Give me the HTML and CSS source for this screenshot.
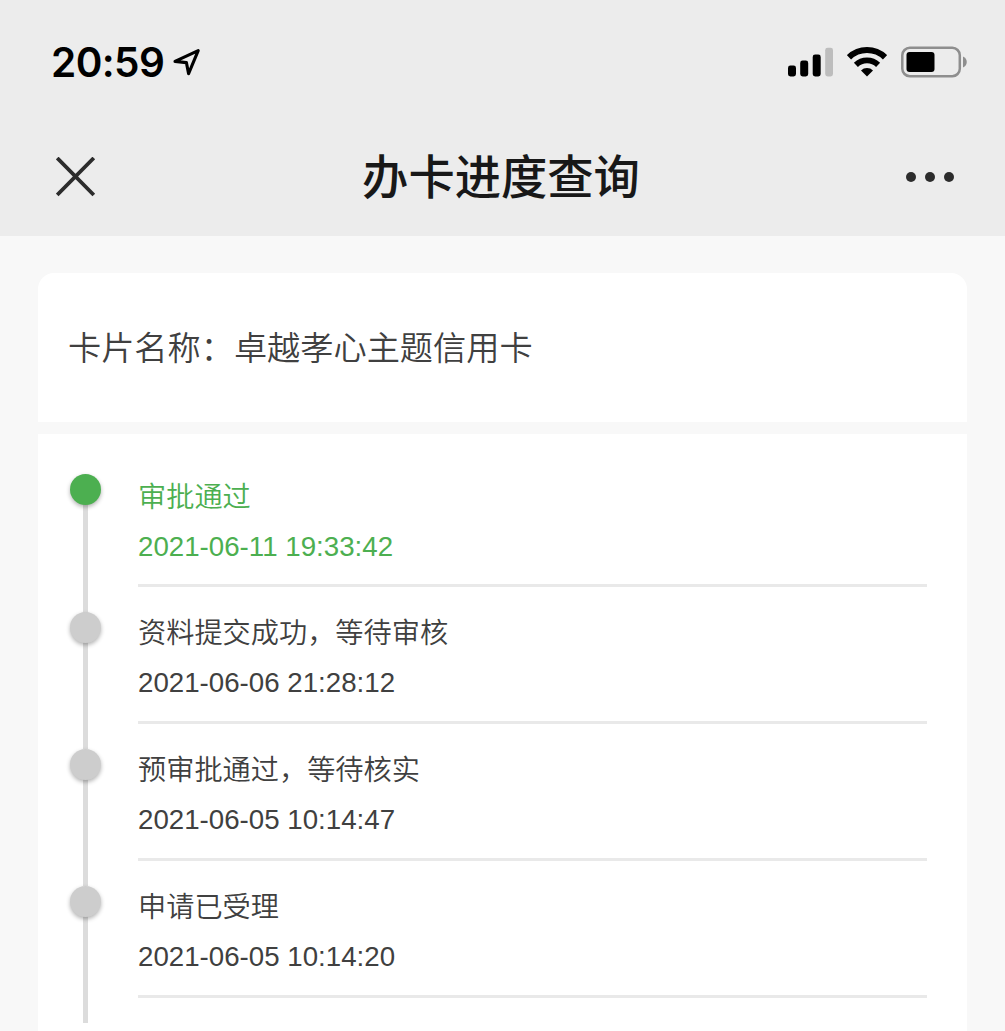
FILE: index.html
```html
<!DOCTYPE html>
<html lang="zh-CN">
<head>
    <meta charset="UTF-8">
    <meta name="viewport" content="width=device-width, initial-scale=1.0">
    <title>办卡进度查询</title>
    <link rel="stylesheet" href="styles.css">
</head>
<body>
    <header class="header">
        <div class="status-bar">
            <div class="status-left">
                <span class="time">20:59</span>
                <svg class="location" width="30" height="30" viewBox="0 0 30 30">
                    <path d="M3 14.4 L26.2 3.6 L16.6 26.6 L14.4 15.6 Z" fill="none" stroke="#000" stroke-width="3.1" stroke-linejoin="round"/>
                </svg>
            </div>
            <div class="status-right">
                <svg width="46" height="30" viewBox="0 0 46 30">
                    <rect x="1" y="18.5" width="8" height="11" rx="2.4"/>
                    <rect x="13.2" y="13.5" width="8" height="16" rx="2.4"/>
                    <rect x="25.7" y="7.5" width="8" height="22" rx="2.4"/>
                    <rect x="38.2" y="0.8" width="7.8" height="28.7" rx="2.4" fill="#bdbdbd"/>
                </svg>
                <svg width="40" height="30" viewBox="0 0 40 30">
                    <path d="M2 10.3 A26 26 0 0 1 38 10.3" fill="none" stroke="#000" stroke-width="6"/>
                    <path d="M8.9 17.8 A16 16 0 0 1 31.1 17.8" fill="none" stroke="#000" stroke-width="5.8"/>
                    <path d="M20 29.5 L14 23.4 A8.8 8.8 0 0 1 26 23.4 Z"/>
                </svg>
                <svg width="66" height="32" viewBox="0 0 66 32">
                    <rect x="1.3" y="1.8" width="57.5" height="28.4" rx="7.5" fill="none" stroke="#8e8e8e" stroke-width="2.5"/>
                    <rect x="5.5" y="6" width="28" height="20" rx="3"/>
                    <path d="M62 10.5 C67 12.5 67 19.5 62 21.5 Z" fill="#8e8e8e"/>
                </svg>
            </div>
        </div>
        <div class="nav-bar">
            <svg class="close" width="40" height="40" viewBox="0 0 40 40">
                <path d="M1.2 1 L37.8 38 M37.8 1 L1.2 38" fill="none" stroke="#2c2c2c" stroke-width="3.8"/>
            </svg>
            <h1 class="title">办卡进度查询</h1>
            <div class="more"><i></i><i></i><i></i></div>
        </div>
    </header>

    <main class="content">
        <section class="card-name">卡片名称：卓越孝心主题信用卡</section>
        <section class="progress">
            <ul class="timeline">
                <li class="step active">
                    <div class="step-text">审批通过</div>
                    <div class="step-time">2021-06-11 19:33:42</div>
                </li>
                <li class="step">
                    <div class="step-text">资料提交成功，等待审核</div>
                    <div class="step-time">2021-06-06 21:28:12</div>
                </li>
                <li class="step">
                    <div class="step-text">预审批通过，等待核实</div>
                    <div class="step-time">2021-06-05 10:14:47</div>
                </li>
                <li class="step">
                    <div class="step-text">申请已受理</div>
                    <div class="step-time">2021-06-05 10:14:20</div>
                </li>
            </ul>
        </section>
    </main>
</body>
</html>
```
FILE: styles.css
```css
* {
    margin: 0;
    padding: 0;
    box-sizing: border-box;
}

body {
    height: 1031px;
    background: #f8f8f8;
    font-family: "Liberation Sans", "Noto Sans CJK SC", sans-serif;
    color: #404040;
    overflow: hidden;
}

.header {
    height: 236px;
    background: #ececec;
}

.status-bar {
    height: 118px;
    padding: 5px 38px 0 51px;
    display: flex;
    justify-content: space-between;
    align-items: center;
}

.status-left,
.status-right {
    display: flex;
    align-items: center;
}

.status-left {
    gap: 8px;
}

.status-right {
    gap: 14px;
}

.time {
    padding-top: 2px;
    font-family: Inter, sans-serif;
    font-size: 40.5px;
    font-weight: 600;
    line-height: 50px;
    letter-spacing: -0.6px;
    color: #000;
}

.nav-bar {
    height: 118px;
    padding: 0 51px 0 56px;
    display: flex;
    justify-content: space-between;
    align-items: center;
}

.title {
    padding-bottom: 6px;
    font-family: "Noto Sans CJK SC", sans-serif;
    font-size: 46.3px;
    font-weight: 500;
    line-height: 60px;
    color: #181818;
}

.more {
    display: flex;
    gap: 9px;
}

.more i {
    width: 10px;
    height: 10px;
    border-radius: 50%;
    background: #2c2c2c;
}

.content {
    padding: 37px 38px 0;
}

.card-name {
    height: 149px;
    padding-left: 30px;
    border-radius: 16px 16px 0 0;
    background: #fff;
    font-family: "Noto Sans CJK SC", sans-serif;
    font-size: 33.2px;
    font-weight: 350;
    line-height: 145px;
}

.progress {
    height: 610px;
    margin-top: 12px;
    padding: 40px 40px 0 32px;
    background: #fff;
}

.timeline {
    list-style: none;
}

.step {
    position: relative;
    height: 137px;
    margin-left: 68px;
    border-bottom: 3px solid #e9e9e9;
}

.step:first-child {
    height: 113px;
}

/* vertical line and dot of each step */
.step::before {
    content: "";
    position: absolute;
    left: -55px;
    top: 30px;
    width: 5px;
    height: 132px;
    background: #dcdcdc;
}

.step::after {
    content: "";
    position: absolute;
    left: -68px;
    top: 25px;
    width: 31px;
    height: 31px;
    border-radius: 50%;
    background: #cdcdcd;
    box-shadow: 0 2px 4px rgba(0, 0, 0, 0.3);
    z-index: 1;
}

.step:first-child::before {
    top: 15px;
}

.step:first-child::after {
    top: 0;
    background: #4caf50;
}

.step-text {
    padding-top: 23px;
    font-family: "Noto Sans CJK SC", sans-serif;
    font-size: 28.2px;
    font-weight: 350;
    line-height: 42px;
}

.step:first-child .step-text {
    padding-top: 0;
}

.step-time {
    margin-top: 15px;
    font-size: 27.7px;
    line-height: 32px;
}

.active {
    color: #4caf50;
}
```
